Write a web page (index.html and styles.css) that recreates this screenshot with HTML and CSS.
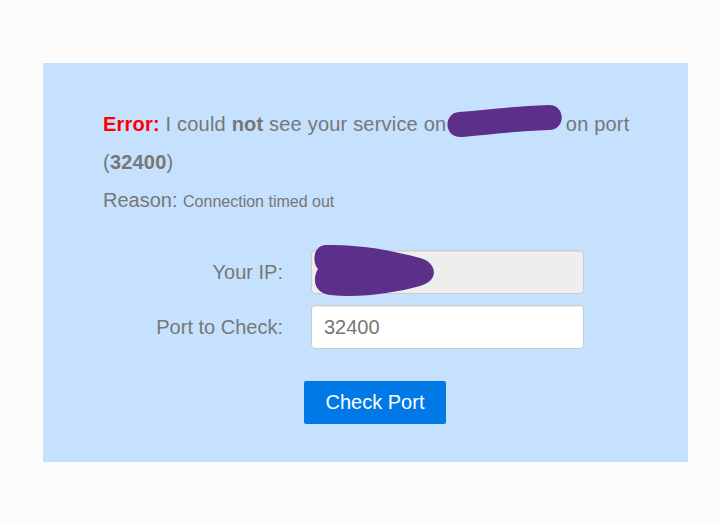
FILE: index.html
```html
<!DOCTYPE html>
<html>
<head>
<meta charset="utf-8">
<link rel="stylesheet" href="styles.css">
</head>
<body>
<div class="panel">
  <div class="message">
    <p class="line first"><span class="err">Error:</span> I could <b>not</b> see your service on <span class="redact"><svg class="blob1" viewBox="0 0 116 32" width="116" height="32"><path d="M13 7 C45 4 75 1 103 0 C120 0 120 25 103 25 C75 26 45 29 17 32 C-3 34 -3 8 13 7 Z"/></svg></span> on port (<b>32400</b>)</p>
    <p class="line reason">Reason: <span class="small">Connection timed out</span></p>
  </div>
  <form class="form">
    <label class="label">Your IP:</label>
    <div class="field">
      <input class="input readonly" type="text" value="" readonly>
      <svg class="blob2" viewBox="0 0 130 50" width="130" height="50"><path d="M14 -5 C49 -6 84 1 109 8 C126 12 129 31 109 36 C84 43 49 48 19 45 C3 43 1 29 7 19 C1 13 2 -4 14 -5 Z"/></svg>
    </div>
    <label class="label">Port to Check:</label>
    <div class="field">
      <input class="input" type="text" value="32400">
    </div>
  </form>
  <div class="actions">
    <button class="btn" type="button">Check Port</button>
  </div>
</div>
</body>
</html>
```
FILE: styles.css
```css
html, body {
  margin: 0;
  padding: 0;
  background: #fcfcfc;
  font-family: "Liberation Sans", Arial, sans-serif;
}
.panel {
  box-sizing: border-box;
  width: 645px;
  margin: 63px 0 0 43px;
  padding: 42px 56px 38px 60px;
  background: #c5e1fe;
  color: #777;
}
.message .line {
  margin: 0;
  font-size: 20px;
  line-height: 38px;
}
.message .first {
  letter-spacing: 0.2px;
}
.message .reason {
  line-height: 39px;
}
.err {
  color: #ff0000;
  font-weight: bold;
}
.message b {
  font-weight: bold;
}
.redact {
  display: inline-block;
  position: relative;
  width: 108px;
  height: 0;
  vertical-align: baseline;
}
.blob1 {
  position: absolute;
  left: -6px;
  top: -26px;
  overflow: visible;
  fill: #5b2f8a;
}
.small {
  font-size: 16px;
}
.form {
  display: grid;
  grid-template-columns: 180px 273px;
  column-gap: 28px;
  row-gap: 11px;
  margin-top: 29px;
  align-items: center;
}
.label {
  text-align: right;
  font-size: 20px;
  color: #777;
}
.field {
  position: relative;
  height: 44px;
}
.input {
  box-sizing: border-box;
  width: 273px;
  height: 44px;
  margin: 0;
  padding: 0 12px;
  border: 1px solid #cccccc;
  border-radius: 4px;
  background: #ffffff;
  box-shadow: inset 0 1px 1px rgba(0,0,0,0.075);
  font-family: "Liberation Sans", Arial, sans-serif;
  font-size: 20px;
  color: #777;
  outline: none;
}
.input.readonly {
  background: #eeeeee;
}
.blob2 {
  position: absolute;
  left: 0;
  top: 0;
  overflow: visible;
  fill: #5b2f8a;
}
.actions {
  margin-top: 32px;
  padding-left: 201px;
}
.btn {
  box-sizing: border-box;
  width: 142px;
  height: 43px;
  border: none;
  border-radius: 2px;
  background: #0079e6;
  color: #ffffff;
  font-family: "Liberation Sans", Arial, sans-serif;
  font-size: 20px;
  padding: 0;
  cursor: pointer;
}
```
